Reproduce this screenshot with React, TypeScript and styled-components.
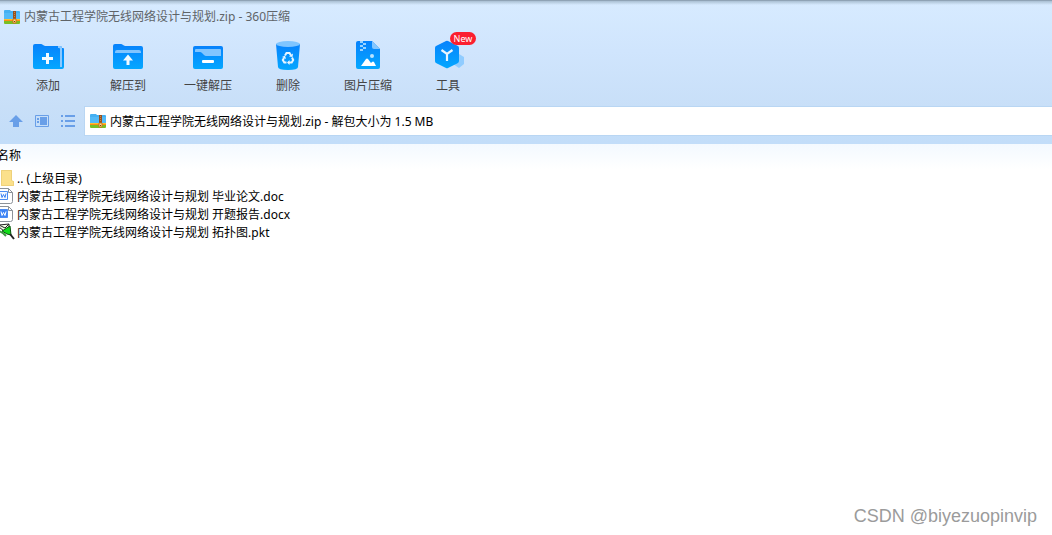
import React from "react";
import styled, { createGlobalStyle } from "styled-components";

const GlobalStyle = createGlobalStyle`
  * { box-sizing: border-box; }
  body {
    margin: 0;
    background: #fff;
    color: #000;
    font: 12px/18px "Noto Sans", "Noto Sans CJK SC", sans-serif;
  }
  button, input { font: inherit; color: inherit; }
`;

const Window = styled.div`
  display: flex;
  flex-direction: column;
  min-height: 100vh;
`;

const Chrome = styled.header`
  border-top: 1px solid #8fa3b5;
  background:
    linear-gradient(#a9bfd2, rgba(190, 212, 230, 0) 4px),
    linear-gradient(#d7ebff, #d0e5fd 50px, #c8dff8 106px, #c2ddf9 143px);
`;

const TitleBar = styled.h1`
  display: flex;
  align-items: center;
  gap: 4px;
  height: 31px;
  margin: 0;
  padding: 0 4px;
  color: #5f6468;
  font-size: 12px;
  font-weight: 400;
`;

const Toolbar = styled.div`
  display: flex;
  height: 74px;
  padding: 0 8px;
`;

const Tool = styled.button`
  position: relative;
  display: flex;
  flex-direction: column;
  align-items: center;
  width: 80px;
  padding: 5px 0 0;
  border: 0;
  background: none;
  color: #444;
  svg { display: block; margin-bottom: 4px; }
`;

const Badge = styled.span`
  position: absolute;
  top: 0;
  left: 42px;
  width: 26px;
  height: 13px;
  border-radius: 7px;
  background: #fb1f2f;
  color: #fff;
  font-size: 9px;
  line-height: 13px;
  text-align: center;
`;

const AddressBar = styled.div`
  display: flex;
  align-items: center;
  height: 38px;
  padding-bottom: 8px;
`;

const NavButtons = styled.div`
  display: flex;
  flex: none;
  gap: 10px;
  width: 84px;
  padding-left: 8px;
`;

const NavButton = styled.button`
  width: 16px;
  height: 16px;
  padding: 0;
  border: 0;
  background: none;
  color: #699fe8;
  svg { display: block; }
`;

const PathField = styled.label`
  display: flex;
  flex: 1;
  align-items: center;
  gap: 4px;
  height: 30px;
  padding-left: 5px;
  border: 1px solid #b9d6f3;
  border-right: 0;
  background: #fff;
`;

const PathInput = styled.input`
  flex: 1;
  min-width: 0;
  padding: 2px 0 0;
  border: 0;
  outline: 0;
  background: none;
`;

const FileTable = styled.table`
  width: 100%;
  border-collapse: collapse;
  text-align: left;
`;

const NameHeader = styled.th`
  height: 25px;
  padding: 0 0 2px;
  background: linear-gradient(#f3f9ff, #fff);
  font-weight: 400;
  text-indent: -3px;
`;

const IconCell = styled.td`
  width: 17px;
  height: 18px;
  padding: 0;
  svg { display: block; }
`;

const NameCell = styled.td`
  height: 18px;
  padding: 2px 0 0;
  line-height: 16px;
`;

const Watermark = styled.footer`
  margin-top: auto;
  padding: 0 15px 7px 0;
  color: #9b9b9b;
  font: 18px/24px "Liberation Sans", sans-serif;
  text-align: right;
`;

const ZipIcon = () => (
  <svg width="16" height="16" viewBox="0 0 16 16" aria-hidden="true">
    <path d="M0 2q0-1 1-1h5l1 1h8q1 0 1 1v7H0z" fill="#45b0f2" />
    <path d="M0 4h16v6H0z" fill="#52baf8" />
    <path d="M0 10h16v1H0z" fill="#ffc02e" />
    <path d="M0 11h16v1H0z" fill="#ff8b16" />
    <path d="M0 12h16v2q0 1-1 1H1q-1 0-1-1z" fill="#79be24" />
    <path d="M9 2h3v9H9z" fill="#96501f" />
    <path d="M10 3.500h1M10 5.500h1M10 7.500h1" stroke="#c98440" />
    <path d="M9 10h3v4H9z" fill="#ffe39a" stroke="#c9741c" />
    <path d="M10 12h1v1h-1z" fill="#7c3b10" />
  </svg>
);

const Blue = ({ id }: { id: string }) => (
  <defs>
    <linearGradient id={id} x1="0" y1="0" x2="0" y2="1">
      <stop offset="0" stopColor="#0782fc" />
      <stop offset="1" stopColor="#04a7ff" />
    </linearGradient>
  </defs>
);

const Glyph = ({ id, children }: { id: string; children: React.ReactNode }) => (
  <svg width="36" height="36" viewBox="0 0 36 36" aria-hidden="true">
    <Blue id={id} />
    {children}
  </svg>
);

const AddIcon = () => (
  <Glyph id="add">
    <path d="M3 9q0-2 2-2h6q1 0 2 1l2 1h15q2 0 2 2h1q1 0 1 1v18q0 2-2 2H5q-2 0-2-2z" fill="url(#add)" />
    <path d="M28 9h2q2 0 2 2v19h-2V12q0-1-1-1h-1z" fill="#8bc9ff" />
    <path d="M17.500 16v11M12 21.500h11" stroke="#f2faff" strokeWidth="3" />
  </Glyph>
);

const ExtractIcon = () => (
  <Glyph id="extract">
    <path d="M3 9q0-2 2-2h6q1 0 2 1l2 1h16q2 0 2 2v19q0 2-2 2H5q-2 0-2-2z" fill="url(#extract)" />
    <path d="M5 15q0-2 2-2h22q2 0 2 2v1H5z" fill="#81c5ff" />
    <path d="M18 17.500l5 6h-3.500V28h-3v-4.500H13z" fill="#f2faff" />
  </Glyph>
);

const OneClickIcon = () => (
  <Glyph id="oneclick">
    <path d="M3 11q0-2 2-2h26q2 0 2 2v19q0 2-2 2H5q-2 0-2-2z" fill="url(#oneclick)" />
    <path d="M5 13q0-1 1-1h24q1 0 1 1v6H16q-1 0-2-1l-2-2q-1-1-2-1H5z" fill="#81c5ff" />
    <rect x="12" y="23" width="12" height="3" rx="1" fill="#fff" />
  </Glyph>
);

const DeleteIcon = () => (
  <Glyph id="delete">
    <path d="M6 7l2 23q0 3 10 3t10-3l2-23z" fill="url(#delete)" />
    <ellipse cx="18" cy="7" rx="12" ry="3" fill="#7fc5ff" />
    <g fill="none" stroke="#e8f6ff" strokeWidth="2">
      <path d="M15 18.500l1.500-2.500h3l1.500 2.500" />
      <path d="M22 20.500l1.200 2.500-1.500 2.500H19" />
      <path d="M16.500 25.500h-2.200L12.800 23l1.200-2" />
    </g>
    <path d="M19 19.500l3.500.5.500-3.500zM19.500 23v5l-2.500-2.500zM12 20l3-1.500 1 3.500z" fill="#e8f6ff" />
  </Glyph>
);

const ImageIcon = () => (
  <Glyph id="image">
    <path d="M6 6q0-2 2-2h14l8 8v18q0 2-2 2H8q-2 0-2-2z" fill="url(#image)" />
    <path d="M22 4l8 8h-6q-2 0-2-2z" fill="#83c6ff" />
    <path d="M10 4h3v2h-3zM13 6h3v2h-3zM10 8h3v2h-3zM13 10h3v2h-3zM10 12h3v2h-3z" fill="#9bd3ff" />
    <circle cx="22" cy="19" r="2" fill="#b9e3ff" />
    <path d="M11 29l5-7q1-1 2 0l3 4 1-1q1-1 2 0l2 4z" fill="#fff" />
  </Glyph>
);

const ToolsIcon = () => (
  <Glyph id="tools">
    <path d="M29 17l5 3v7l-5 4-6-4v-7z" fill="#90ccff" />
    <path d="M16 4q1-.6 2 0l10 5q1 .6 1 2v13q0 1-1 2l-10 5q-1 .6-2 0L6 26q-1-.6-1-2V11q0-1.400 1-2z" fill="url(#tools)" />
    <path d="M11.500 13l5.500 4 5.500-4M17 17v7" fill="none" stroke="#e8f6ff" strokeWidth="2.200" />
  </Glyph>
);

const UpIcon = () => (
  <svg width="16" height="16" aria-hidden="true">
    <path d="M8 2l7 7h-4v5H5V9H1z" fill="currentColor" />
  </svg>
);

const PaneIcon = () => (
  <svg width="16" height="16" aria-hidden="true">
    <path d="M1.500 2.500h13v11h-13z" fill="none" stroke="currentColor" />
    <path d="M6 4h7v8H6zM3 5h2v2H3zM3 8h2v2H3z" fill="currentColor" />
  </svg>
);

const ListIcon = () => (
  <svg width="16" height="16" aria-hidden="true">
    <path d="M1 3h2M5 3h10M1 8h2M5 8h10M1 13h2M5 13h10" stroke="currentColor" strokeWidth="2" />
  </svg>
);

const FolderIcon = () => (
  <svg width="16" height="18" aria-hidden="true">
    <path d="M1 1h11v11h2v5H1z" fill="#fbe08b" />
    <path d="M1.500 1.500h10v10l2 1v4h-12z" fill="none" stroke="#eed17a" />
  </svg>
);

const WordIcon = ({ solid = false }: { solid?: boolean }) => (
  <svg width="16" height="18" aria-hidden="true">
    <path d="M0 1.500h8.500l4 4v9q0 2-2 2H0" fill="#fff" stroke="#8c9299" />
    <path d="M8.500 1.500v4h4" fill="none" stroke="#8c9299" />
    <path d="M-1 4.500h8.500v8H-1z" fill={solid ? "#3c83f6" : "#f5f9ff"} stroke="#4b8cf3" />
    <path d="M1 6.500l1 4 1.500-3 1.500 3 1-4" fill="none" stroke={solid ? "#fff" : "#3c83f6"} />
  </svg>
);

const PacketIcon = () => (
  <svg width="16" height="18" aria-hidden="true">
    <path d="M-1 2l10-1v6l-5 1-5-4z" fill="#f4ffe9" stroke="#222" />
    <path d="M-1 2l6 3 4-4" fill="none" stroke="#222" />
    <path d="M2 8l8-5 1 9-4-1z" fill="#10df18" stroke="#07520b" />
    <path d="M-1 8l4 2 3 3" fill="none" stroke="#3a9b3e" strokeWidth="2" />
    <path d="M10 11l4 5" stroke="#222" strokeWidth="2" />
  </svg>
);

const tools = [
  { label: "添加", icon: <AddIcon /> },
  { label: "解压到", icon: <ExtractIcon /> },
  { label: "一键解压", icon: <OneClickIcon /> },
  { label: "删除", icon: <DeleteIcon /> },
  { label: "图片压缩", icon: <ImageIcon /> },
  { label: "工具", icon: <ToolsIcon />, badge: "New" },
];

const files = [
  { name: ".. (上级目录)", icon: <FolderIcon /> },
  { name: "内蒙古工程学院无线网络设计与规划 毕业论文.doc", icon: <WordIcon /> },
  { name: "内蒙古工程学院无线网络设计与规划 开题报告.docx", icon: <WordIcon solid /> },
  { name: "内蒙古工程学院无线网络设计与规划 拓扑图.pkt", icon: <PacketIcon /> },
];

export default function App() {
  return (
    <>
      <GlobalStyle />
      <Window>
        <Chrome>
          <TitleBar>
            <ZipIcon />
            内蒙古工程学院无线网络设计与规划.zip - 360压缩
          </TitleBar>
          <Toolbar>
            {tools.map((tool) => (
              <Tool key={tool.label} type="button">
                {tool.icon}
                {tool.label}
                {tool.badge && <Badge>{tool.badge}</Badge>}
              </Tool>
            ))}
          </Toolbar>
          <AddressBar>
            <NavButtons>
              <NavButton type="button" aria-label="向上"><UpIcon /></NavButton>
              <NavButton type="button" aria-label="预览"><PaneIcon /></NavButton>
              <NavButton type="button" aria-label="列表"><ListIcon /></NavButton>
            </NavButtons>
            <PathField>
              <ZipIcon />
              <PathInput
                aria-label="路径"
                readOnly
                value="内蒙古工程学院无线网络设计与规划.zip - 解包大小为 1.5 MB"
              />
            </PathField>
          </AddressBar>
        </Chrome>
        <FileTable>
          <thead>
            <tr><NameHeader colSpan={2} scope="col">名称</NameHeader></tr>
          </thead>
          <tbody>
            {files.map((file) => (
              <tr key={file.name}>
                <IconCell>{file.icon}</IconCell>
                <NameCell>{file.name}</NameCell>
              </tr>
            ))}
          </tbody>
        </FileTable>
        <Watermark>CSDN @biyezuopinvip</Watermark>
      </Window>
    </>
  );
}
